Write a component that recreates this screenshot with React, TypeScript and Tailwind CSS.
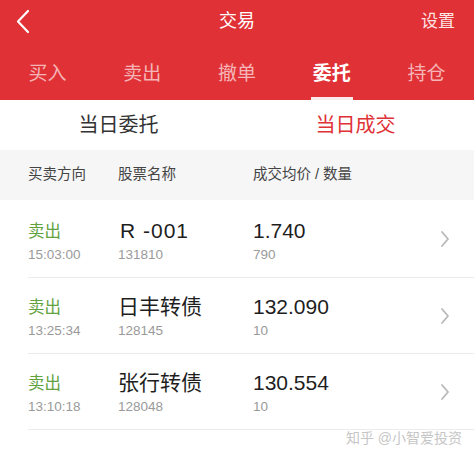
import React from "react";

const rows = [
  { side: "卖出", time: "15:03:00", name: "R -001", code: "131810", price: "1.740", qty: "790" },
  { side: "卖出", time: "13:25:34", name: "日丰转债", code: "128145", price: "132.090", qty: "10" },
  { side: "卖出", time: "13:10:18", name: "张行转债", code: "128048", price: "130.554", qty: "10" },
];

const tabs = ["买入", "卖出", "撤单", "委托", "持仓"];

export default function App() {
  return (
    <div
      className="w-[474px] h-[457px] bg-white overflow-hidden"
      style={{ fontFamily: '"Liberation Sans", "Noto Sans CJK SC", sans-serif' }}
    >
      <div className="bg-[#e03236]">
        <div className="h-[42px] grid grid-cols-[1fr_auto_1fr] items-center px-[15px]">
          <svg width="18" height="26" viewBox="0 0 18 26" className="mt-[1px]">
            <polyline points="13,2 3,12.5 13,23" fill="none" stroke="#fff" strokeWidth="2.2" strokeLinecap="round" strokeLinejoin="round" />
          </svg>
          <div className="text-white text-[18px] leading-none">交易</div>
          <div className="text-[#ffe4e4] text-[17px] leading-none mr-[4px] justify-self-end">设置</div>
        </div>
        <div className="h-[58px] grid grid-cols-5">
          {tabs.map((t) => {
            const active = t === "委托";
            return (
              <div key={t} className="flex flex-col items-center">
                <div
                  className={
                    "mt-[21px] text-[19px] leading-[22px] " +
                    (active ? "text-white font-bold" : "text-[#f5b5b7]")
                  }
                >
                  {t}
                </div>
                <div className="flex-1" />
                {active ? <div className="w-[42px] h-[3px] bg-[#fbeaea]" /> : <div className="h-[3px]" />}
              </div>
            );
          })}
        </div>
      </div>

      <div className="h-[50px] grid grid-cols-2 items-center">
        <div className="text-center text-[20px] text-[#333]">当日委托</div>
        <div className="text-center text-[20px] text-[#e03236]">当日成交</div>
      </div>

      <div className="h-[50px] bg-[#f6f6f6] flex items-center text-[14.5px] text-[#444]">
        <div className="w-[118px] pl-[28px]">买卖方向</div>
        <div className="w-[135px]">股票名称</div>
        <div>成交均价 / 数量</div>
      </div>

      <div className="pl-[28px]">
        {rows.map((r, i) => (
          <div key={i} className={"flex border-b border-[#ececec] " + (i === 0 ? "h-[78px]" : "h-[76px]")}>
            <div className={"flex " + (i === 0 ? "pt-[19px]" : "pt-[17px]")}>
              <div className="w-[90px]">
                <div className="h-6 flex items-center text-[16.5px] text-[#5fa23e]">{r.side}</div>
                <div className="mt-1 h-4 flex items-center text-[13.5px] text-[#9a9a9a]">{r.time}</div>
              </div>
              <div className="w-[135px]">
                <div className="h-6 flex items-center text-[21px] text-[#1e1e1e]">
                  <span className={i === 0 ? "ml-[2px] tracking-[1px]" : ""}>{r.name}</span>
                </div>
                <div className="mt-1 h-4 flex items-center text-[13.5px] text-[#9a9a9a]">{r.code}</div>
              </div>
              <div className="w-[178px]">
                <div className="h-6 flex items-center text-[21px] text-[#1e1e1e]">{r.price}</div>
                <div className="mt-1 h-4 flex items-center text-[13.5px] text-[#9a9a9a]">{r.qty}</div>
              </div>
            </div>
            <div className="flex items-center pl-[9px]">
              <svg width="10" height="18" viewBox="0 0 10 18">
                <polyline points="2,2 8,9 2,16" fill="none" stroke="#b8b8b8" strokeWidth="1.8" strokeLinecap="round" strokeLinejoin="round" />
              </svg>
            </div>
          </div>
        ))}
      </div>

      <div className="flex justify-end pr-[12px] pt-[1px] text-[14px] text-[#c6c6c6] leading-[14px]">知乎 @小智爱投资</div>
    </div>
  );
}
